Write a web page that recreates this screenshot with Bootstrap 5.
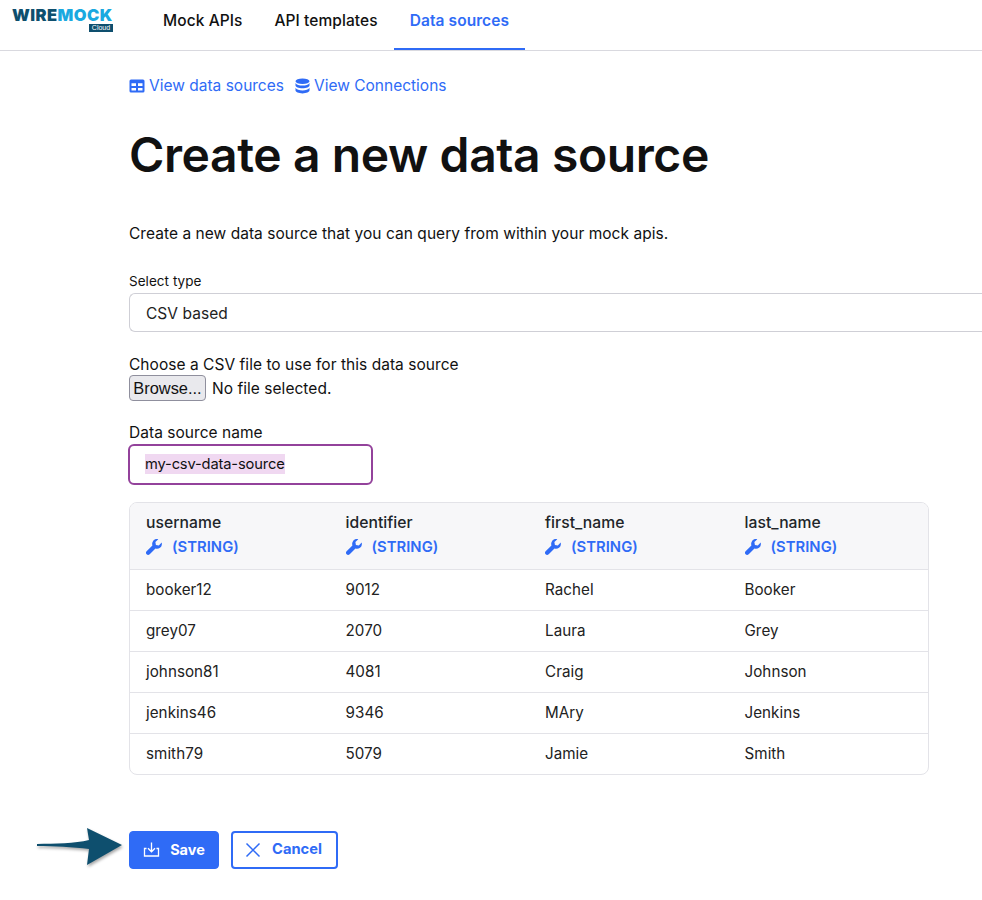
<!doctype html>
<html lang="en"><head><meta charset="utf-8"><title>Create a new data source</title>
<link rel="stylesheet" href="https://cdn.jsdelivr.net/npm/bootstrap@5.3.0/dist/css/bootstrap.min.css">
<style>
body{font-family:Inter,"Liberation Sans",sans-serif;color:#111;background:#fff;font-size:15.5px;letter-spacing:.04px}
.topbar{height:51px;border-bottom:1px solid #d9d9df;padding:0}
.logo-box{width:147px;height:50px;padding:7px 0 0 12px;flex:none}
.logo-word{font-family:Inter,"Liberation Sans",sans-serif;font-weight:900;font-size:16.5px;line-height:17px;letter-spacing:.45px;display:block;width:110px;white-space:nowrap}
.logo-wire{color:#0e4f6e}.logo-mock{color:#1aa9e0}
.logo-cloud{display:block;width:24px;margin-left:77px;background:#0e4f6e;color:#fff;font-size:7px;line-height:8px;text-align:center;font-family:"Liberation Sans",sans-serif;letter-spacing:0}
.top-link{color:#111;font-weight:500;font-size:15.5px;height:50px;line-height:41px;padding:0 16px;text-decoration:none;letter-spacing:.08px}
.top-link.is-on{color:#2f6bf6;font-weight:600;border-bottom:2px solid #2f6bf6}
.page{padding:0 0 0 129px;width:100%}
.crumbs{padding-top:20px;height:50px;gap:11px;font-size:15.5px;line-height:22px;letter-spacing:0}
.crumbs a{color:#2f6bf6;text-decoration:none;font-weight:400;display:flex;align-items:center;gap:4px}
.crumbs svg{fill:#2f6bf6;display:block}
.page-title{font-weight:600;font-size:48px;line-height:56px;margin:26px 0 0;letter-spacing:-.4px;color:#111}
.intro{margin:40px 0 0;line-height:22px}
.lbl{display:block;font-size:13.5px;line-height:16px;margin:28px 0 0}
.type-select{display:block;width:853px;height:39px;border:1px solid #cfcfd6;border-right:0;border-radius:6px 0 0 6px;margin-top:4px;padding:1px 16px 0;line-height:37px;color:#222}
.file-label{line-height:22px;margin:22px 0 -1px}
.browse{background:#e9e9ed;border:1px solid #8f8f9d;border-radius:4px;font-family:"Liberation Sans",sans-serif;font-size:16.4px;letter-spacing:0;height:26px;width:77px;padding:0;line-height:24px;color:#111}
.file-row{gap:6px;height:26px}
.file-row span{padding-top:2px}
.name-label{line-height:22px;margin-top:21px}
.name-box{width:245px;height:41px;border:2px solid #93429b;border-radius:6px;padding:0 0 1px 15px;display:flex;align-items:center;font-size:14.7px;letter-spacing:-.15px;margin-left:-1px}
.name-box span{background:#f0d8f1;line-height:20px}
.data-wrap{width:800px;margin-top:17px;border:1px solid #e3e3e8;border-radius:8px;overflow:hidden}
.data-grid{margin:0;table-layout:fixed;width:100%;--bs-table-border-color:#e3e3e8}
.data-grid th{background:#f7f7f9;padding:8px 16px 11px;font-weight:500;font-size:15.7px;line-height:24px;vertical-align:top}
.data-grid td{padding:0 16px;height:41px;vertical-align:middle;font-size:15.2px;color:#222}
.data-grid tr:last-child td{border-bottom:0;height:40px;padding-top:1px}
.type-tag{display:flex;align-items:center;gap:10px;color:#2f6bf6;font-weight:600;font-size:14.8px;line-height:22px;margin-top:1px}
.type-tag svg{fill:#2f6bf6;display:block}
.actions{margin-top:56px;gap:12px;position:relative;padding-bottom:31px}
.act{height:38px;border-radius:4px;font-weight:700;font-size:14.5px;display:flex;align-items:center;padding:0;justify-content:center;letter-spacing:0}
.act-save{width:90px;background:#2f6bf6;border:1px solid #2f6bf6;color:#fff;gap:10px}
.act-cancel{width:107px;background:#fff;border:2px solid #2f6bf6;color:#2f6bf6;gap:11px;font-size:14.7px;padding-right:2px}
.act-save:hover{background:#2f6bf6;color:#fff}.act-cancel:hover{background:#fff;color:#2f6bf6}
.arrow-note{position:absolute;left:-96px;top:-6px;filter:drop-shadow(1px 2px 1.5px rgba(0,0,0,.35))}
</style></head>
<body>
<nav class="topbar d-flex align-items-start">
  <div class="logo-box"><span class="logo-word"><span class="logo-wire">WIRE</span><span class="logo-mock">MOCK</span></span><span class="logo-cloud">Cloud</span></div>
  <a class="top-link" href="#">Mock APIs</a>
  <a class="top-link" href="#">API templates</a>
  <a class="top-link is-on" href="#">Data sources</a>
</nav>
<main class="page">
  <div class="crumbs d-flex">
    <a href="#"><svg width="16" height="16" viewBox="0 0 16 16"><path d="M2 1.500h12A1.500 1.500 0 0 1 15.500 3v10a1.500 1.500 0 0 1-1.500 1.500H2A1.500 1.500 0 0 1 .5 13V3A1.500 1.500 0 0 1 2 1.500zM2.500 5.300v2.700h4.500V5.300H2.500zm6.500 0v2.700h4.500V5.300H9zM2.500 10v2.500h4.500V10H2.500zm6.500 0v2.500h4.500V10H9z" fill-rule="evenodd"/></svg>View data sources</a>
    <a href="#"><svg width="15" height="16" viewBox="0 0 15 16"><ellipse cx="7.500" cy="3.200" rx="7" ry="2.800"/><path d="M.5 5c1 1.800 3.800 2.600 7 2.600s6-.8 7-2.600v2.500c0 1.600-3.100 2.800-7 2.800s-7-1.200-7-2.800zM.5 9.800c1 1.800 3.800 2.600 7 2.600s6-.8 7-2.600v2.800c0 1.600-3.100 2.800-7 2.800s-7-1.200-7-2.800z"/></svg>View Connections</a>
  </div>
  <h1 class="page-title">Create a new data source</h1>
  <p class="intro">Create a new data source that you can query from within your mock apis.</p>
  <label class="lbl">Select type</label>
  <div class="type-select">CSV based</div>
  <div class="file-label">Choose a CSV file to use for this data source</div>
  <div class="file-row d-flex align-items-center"><button type="button" class="browse">Browse...</button><span>No file selected.</span></div>
  <div class="name-label">Data source name</div>
  <div class="name-box"><span>my-csv-data-source</span></div>
  <div class="data-wrap">
    <table class="table data-grid">
      <thead><tr>
        <th>username<div class="type-tag"><svg width="16" height="16" viewBox="0 0 16 16"><use href="#wrench"/></svg>(STRING)</div></th>
        <th>identifier<div class="type-tag"><svg width="16" height="16" viewBox="0 0 16 16"><use href="#wrench"/></svg>(STRING)</div></th>
        <th>first_name<div class="type-tag"><svg width="16" height="16" viewBox="0 0 16 16"><use href="#wrench"/></svg>(STRING)</div></th>
        <th>last_name<div class="type-tag"><svg width="16" height="16" viewBox="0 0 16 16"><use href="#wrench"/></svg>(STRING)</div></th>
      </tr></thead>
      <tbody>
        <tr><td>booker12</td><td>9012</td><td>Rachel</td><td>Booker</td></tr>
        <tr><td>grey07</td><td>2070</td><td>Laura</td><td>Grey</td></tr>
        <tr><td>johnson81</td><td>4081</td><td>Craig</td><td>Johnson</td></tr>
        <tr><td>jenkins46</td><td>9346</td><td>MAry</td><td>Jenkins</td></tr>
        <tr><td>smith79</td><td>5079</td><td>Jamie</td><td>Smith</td></tr>
      </tbody>
    </table>
  </div>
  <div class="actions d-flex">
    <svg class="arrow-note" width="92" height="46" viewBox="0 0 92 46"><path d="M4 19C22 18.500 42 18.500 56 15L54 3 89 20 54 40 56 24C40 22 20 21 4 21z" fill="#0e4f6e"/></svg>
    <button type="button" class="btn act act-save"><svg width="17" height="17" viewBox="0 0 17 17" fill="none" stroke="#fff" stroke-width="1.300"><path d="M8.500 1.500v9M5 7.300l3.500 3.500L12 7.300M3.500 7.500H1.500v7.500h14V7.500h-2"/></svg>Save</button>
    <button type="button" class="btn act act-cancel"><svg width="16" height="16" viewBox="0 0 16 16" fill="none" stroke="#2f6bf6" stroke-width="1.500"><path d="M1.500 1.500l13 13M14.500 1.500l-13 13"/></svg>Cancel</button>
  </div>
</main>
<svg width="0" height="0" class="d-block"><defs><path id="wrench" d="M15.700 3.600c.5 2-.1 4-1.700 5.200-1.300 1-3 1.200-4.500.7L3.700 15.300c-.9.900-2.300.9-3.100 0-.9-.8-.9-2.200 0-3.100L6.400 6.400c-.5-1.500-.3-3.200.7-4.500C8.300.3 10.300-.3 12.300.2L9.400 3.100l.5 2.900 2.900.5 2.900-2.900z"/></defs></svg>
</body></html>
